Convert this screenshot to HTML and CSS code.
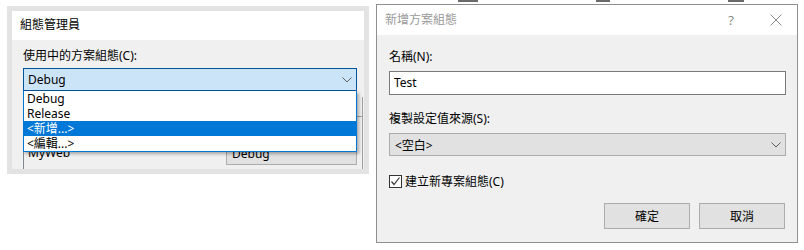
FILE: index.html
```html
<!DOCTYPE html>
<html lang="zh-Hant">
<head>
    <meta charset="UTF-8">
    <title>組態管理員</title>
    <link rel="stylesheet" href="styles.css">
</head>
<body>
    <div class="screen">
        <div class="cfg-window">
            <div class="cfg-title">組態管理員</div>
            <div class="cfg-body">
                <div class="field-label">使用中的方案組態(C):</div>
                <div class="combo-wrap">
                    <div class="combo combo-open">
                        <span>Debug</span>
                        <svg class="chevron" width="10" height="6" viewBox="0 0 10 6"><polyline points="0.5,0.5 5,5 9.5,0.5" fill="none" stroke="#5f5f5f" stroke-width="1"/></svg>
                    </div>
                    <ul class="combo-list">
                        <li>Debug</li>
                        <li>Release</li>
                        <li class="selected">&lt;新增...&gt;</li>
                        <li>&lt;編輯...&gt;</li>
                    </ul>
                </div>
                <div class="project-grid">
                    <div class="grid-header"></div>
                    <div class="grid-row"></div>
                    <div class="grid-row">
                        <span class="grid-name">MyWeb</span>
                        <div class="grid-cell">Debug</div>
                    </div>
                </div>
            </div>
        </div>

        <div class="dialog-column">
            <div class="behind-strip">
                <span class="mark mark-a"></span>
                <span class="mark mark-b"></span>
                <span class="mark mark-c"></span>
            </div>
            <div class="dialog">
                <div class="dialog-title">
                    <span class="dialog-caption">新增方案組態</span>
                    <span class="help-btn">?</span>
                    <svg class="close-btn" width="12" height="12" viewBox="0 0 12 12"><path d="M0.5 0.5 L11.5 11.5 M11.5 0.5 L0.5 11.5" stroke="#8a8a8a" stroke-width="1" fill="none"/></svg>
                </div>
                <div class="dialog-body">
                    <div class="field-label">名稱(N):</div>
                    <div class="text-box">Test</div>
                    <div class="field-label second">複製設定值來源(S):</div>
                    <div class="select-box">
                        <span>&lt;空白&gt;</span>
                        <svg class="chevron" width="10" height="6" viewBox="0 0 10 6"><polyline points="0.5,0.5 5,5 9.5,0.5" fill="none" stroke="#5f5f5f" stroke-width="1"/></svg>
                    </div>
                    <div class="check-row">
                        <span class="check-box">
                            <svg width="11" height="11" viewBox="0 0 11 11"><polyline points="1.5,5.5 4,8.5 9.5,1.5" fill="none" stroke="#333" stroke-width="1.2"/></svg>
                        </span>
                        <span>建立新專案組態(C)</span>
                    </div>
                    <div class="button-row">
                        <button class="dlg-btn">確定</button>
                        <button class="dlg-btn">取消</button>
                    </div>
                </div>
            </div>
        </div>
    </div>
</body>
</html>
```

FILE: styles.css
```css
body {
    margin: 0;
    background: #fff;
    font-family: "Noto Sans", "Noto Sans CJK TC", sans-serif;
    font-size: 12px;
    color: #000;
}

.screen {
    display: flex;
    align-items: flex-start;
    width: 804px;
    height: 250px;
    overflow: hidden;
}

/* 組態管理員 */
.cfg-window {
    margin: 6px 0 0 7px;
    width: 352px;
    border: 5px solid #e3e3e3;
}

.cfg-title {
    height: 29px;
    line-height: 28px;
    padding-left: 8px;
    background: #fff;
}

.cfg-body {
    height: 129px;
    padding: 8px 7px 0 11px;
    box-sizing: border-box;
    background: #f0f0f0;
    overflow: hidden;
    display: flex;
    flex-direction: column;
}

.field-label {
    line-height: 16px;
    height: 16px;
}

.combo-wrap {
    position: relative;
    margin-top: 4px;
    z-index: 2;
}

.combo {
    height: 23px;
    box-sizing: border-box;
    display: flex;
    align-items: center;
    justify-content: space-between;
    padding: 0 4px 0 4px;
}

.combo-open {
    background: #cce4f7;
    border: 1px solid #005499;
}

.combo-list {
    position: absolute;
    top: 100%;
    left: 0;
    right: 0;
    margin: 0;
    padding: 0;
    list-style: none;
    background: #fff;
    border: 1px solid #0078d7;
    border-top: none;
    box-shadow: 2px 2px 3px rgba(0, 0, 0, 0.3);
}

.combo-list li {
    height: 15px;
    line-height: 15px;
    padding-left: 3px;
}

.combo-list li.selected {
    background: #0078d7;
    color: #fff;
}

.project-grid {
    flex: 1;
    margin: 6px -6px 0 0;
    border-left: 1px solid #828790;
    border-right: 1px solid #a0a0a0;
    display: flex;
    flex-direction: column;
}

.grid-header {
    height: 19px;
    border-bottom: 1px solid #a0a0a0;
}

.grid-row {
    height: 25px;
    display: flex;
    align-items: flex-start;
}

.grid-name {
    padding: 3px 0 0 4px;
    line-height: 16px;
}

.grid-cell {
    margin: 0 5px 0 auto;
    width: 131px;
    height: 23px;
    line-height: 21px;
    box-sizing: border-box;
    padding-left: 5px;
    background: #e1e1e1;
    border: 1px solid #adadad;
}

/* 新增方案組態 */
.dialog-column {
    margin-left: 7px;
    display: flex;
    flex-direction: column;
}

.behind-strip {
    height: 4px;
    display: flex;
    align-items: flex-start;
}

.mark {
    height: 2px;
    background: #6a6a6a;
}

.mark-a {
    margin-left: 82px;
    width: 20px;
}

.mark-b {
    margin-left: 118px;
    width: 14px;
}

.mark-c {
    margin-left: 118px;
    width: 16px;
}

.dialog {
    width: 420px;
    border: 1px solid #8f8f8f;
    background: #f0f0f0;
}

.dialog-title {
    height: 30px;
    background: #fff;
    display: flex;
    align-items: center;
    padding-left: 8px;
    color: #999;
}

.dialog-caption {
    flex: 1;
    line-height: 16px;
}

.help-btn {
    font-size: 13px;
    margin-right: 36px;
    color: #8a8a8a;
}

.close-btn {
    margin-right: 15px;
}

.dialog-body {
    padding: 14px 11px 13px 12px;
}

.text-box {
    margin-top: 6px;
    height: 24px;
    box-sizing: border-box;
    border: 1px solid #7a7a7a;
    background: #fff;
    line-height: 22px;
    padding-left: 4px;
}

.field-label.second {
    margin-top: 16px;
}

.select-box {
    margin-top: 6px;
    height: 23px;
    box-sizing: border-box;
    border: 1px solid #adadad;
    background: #e1e1e1;
    display: flex;
    align-items: center;
    justify-content: space-between;
    padding: 0 4px 0 5px;
}

.check-row {
    margin-top: 17px;
    height: 16px;
    display: flex;
    align-items: center;
    gap: 3px;
}

.check-box {
    width: 13px;
    height: 13px;
    box-sizing: border-box;
    border: 1px solid #333;
    background: #fff;
    display: flex;
    align-items: center;
    justify-content: center;
}

.button-row {
    margin: 14px 1px 0 0;
    display: flex;
    justify-content: flex-end;
    gap: 9px;
}

.dlg-btn {
    width: 86px;
    height: 26px;
    border: 1px solid #adadad;
    background: #e1e1e1;
    font-family: inherit;
    font-size: 12px;
    padding: 0;
}
```
